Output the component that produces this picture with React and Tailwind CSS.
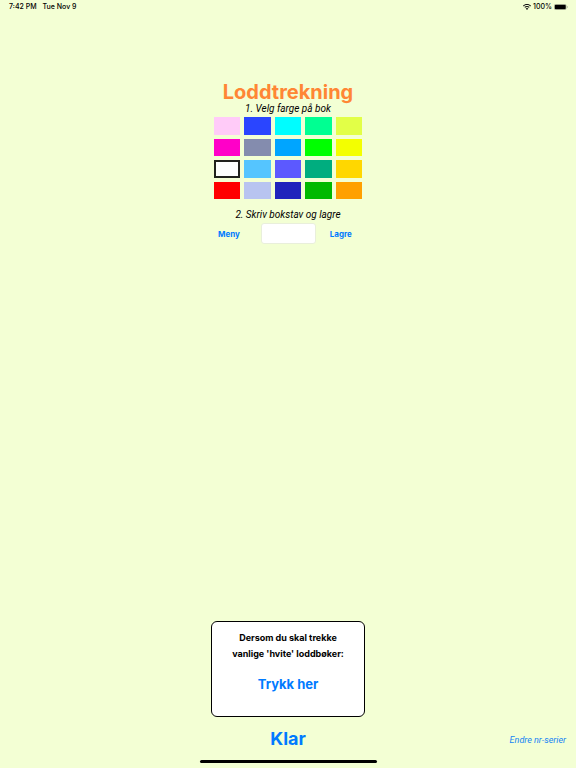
import React, { useState } from 'react';

const COLORS = [
  { name: 'Lys rosa', className: 'bg-[#ffcbf8]' },
  { name: 'Blå', className: 'bg-[#2a45ff]' },
  { name: 'Cyan', className: 'bg-[#00fdff]' },
  { name: 'Mint', className: 'bg-[#00ff92]' },
  { name: 'Lime', className: 'bg-[#e2ff47]' },
  { name: 'Rosa', className: 'bg-[#ff00c8]' },
  { name: 'Grå', className: 'bg-[#848cae]' },
  { name: 'Himmelblå', className: 'bg-[#00a5ff]' },
  { name: 'Grønn', className: 'bg-[#00ff00]' },
  { name: 'Gul', className: 'bg-[#f3ff00]' },
  { name: 'Hvit', className: 'bg-[#fdfffd]' },
  { name: 'Lys blå', className: 'bg-[#55c5ff]' },
  { name: 'Lilla', className: 'bg-[#5c59ff]' },
  { name: 'Sjøgrønn', className: 'bg-[#00ad7f]' },
  { name: 'Gull', className: 'bg-[#ffd700]' },
  { name: 'Rød', className: 'bg-[#ff0000]' },
  { name: 'Gråblå', className: 'bg-[#b8c4f0]' },
  { name: 'Mørk blå', className: 'bg-[#2024bc]' },
  { name: 'Mørk grønn', className: 'bg-[#00b900]' },
  { name: 'Oransje', className: 'bg-[#ffa000]' },
];

const WifiIcon = () => (
  <svg viewBox="0 0 16 12" className="w-2 h-[6px]" aria-hidden="true">
    <path
      d="M8 0C4.900 0 2.100 1.200 0 3.200l1.500 1.600C3.200 3.200 5.500 2.200 8 2.200s4.800 1 6.500 2.600L16 3.200C13.900 1.200 11.100 0 8 0Z"
      fill="#111"
    />
    <path
      d="M8 3.900c-2 0-3.900.8-5.300 2.100l1.600 1.700C5.300 6.700 6.600 6.200 8 6.200s2.700.5 3.700 1.500L13.300 6C11.900 4.700 10 3.900 8 3.900Z"
      fill="#111"
    />
    <path d="M8 7.800c-1 0-1.900.4-2.600 1.100L8 12l2.600-3.100C9.900 8.200 9 7.800 8 7.800Z" fill="#111" />
  </svg>
);

const BatteryIcon = () => (
  <svg viewBox="0 0 28 12" className="w-[14px] h-[6px]" aria-hidden="true">
    <rect x="0.500" y="0.500" width="24" height="11" rx="3" fill="none" stroke="#8d9581" />
    <rect x="1.500" y="1.500" width="22" height="9" rx="2" fill="#000" />
    <path d="M26 4v4c.8-.3 1.500-1.100 1.500-2S26.800 4.300 26 4Z" fill="#8d9581" />
  </svg>
);

const StatusBar = () => (
  <header className="flex items-center justify-between h-[14px] pl-[9px] pr-2 text-[7px] font-medium text-black">
    <div className="flex gap-[6px]">
      <span>7:42 PM</span>
      <span>Tue Nov 9</span>
    </div>
    <div className="flex items-center gap-[2px]">
      <WifiIcon />
      <span>100%</span>
      <BatteryIcon />
    </div>
  </header>
);

const App = () => {
  const [selected, setSelected] = useState('Hvit');
  const [letter, setLetter] = useState('');

  return (
    <div className="flex flex-col min-h-screen bg-[#f3ffd4] text-black font-['Inter','Liberation_Sans',sans-serif]">
      <StatusBar />

      <main className="flex flex-col flex-1 items-center pt-[67px]">
        <h1 className="text-[20px] leading-[22px] font-bold text-[#ff8635]">Loddtrekning</h1>
        <p className="font-['Roboto','Liberation_Sans',sans-serif] text-[10px] leading-3 italic">
          1. Velg farge på bok
        </p>

        <div className="grid grid-cols-5 grid-rows-4 gap-1 w-[148px] h-[82px] mt-[2px]">
          {COLORS.map((color) => (
            <button
              key={color.name}
              type="button"
              aria-label={color.name}
              aria-pressed={selected === color.name}
              onClick={() => setSelected(color.name)}
              className={`${color.className} ${
                selected === color.name ? 'border-2 border-[#20221c]' : ''
              }`}
            />
          ))}
        </div>

        <label
          htmlFor="letter"
          className="mt-[10px] font-['Roboto','Liberation_Sans',sans-serif] text-[10px] leading-3 italic"
        >
          2. Skriv bokstav og lagre
        </label>
        <div className="grid grid-cols-[1fr_55px_1fr] items-center w-[148px] mt-[2px]">
          <button type="button" className="pl-1 text-left text-[8px] leading-3 font-bold text-[#007aff]">
            Meny
          </button>
          <input
            id="letter"
            type="text"
            value={letter}
            onChange={(e) => setLetter(e.target.value)}
            className="w-full h-[21px] px-1 text-[10px] text-center bg-white border border-[#e9efdb] rounded-[3px]"
          />
          <button type="button" className="pl-1 text-[8px] leading-3 font-bold text-[#007aff]">
            Lagre
          </button>
        </div>

        <section className="flex flex-col items-center w-[154px] h-24 mt-auto pt-2 bg-white border border-black rounded-md">
          <p className="text-[9px] leading-4 font-bold text-center">
            Dersom du skal trekke
            <br />
            vanlige 'hvite' loddbøker:
          </p>
          <button type="button" className="mt-3 text-[13px] leading-5 font-bold text-[#007aff]">
            Trykk her
          </button>
        </section>
      </main>

      <footer className="pb-[5px]">
        <div className="grid grid-cols-[1fr_auto_1fr] items-center h-[43px] px-[10px]">
          <button
            type="button"
            className="col-start-2 text-[18px] leading-6 font-bold text-[#007aff]"
          >
            Klar
          </button>
          <button
            type="button"
            className="justify-self-end pt-[3px] font-['Roboto','Liberation_Sans',sans-serif] text-[9px] leading-3 italic text-[#1584f5]"
          >
            Endre nr-serier
          </button>
        </div>
        <div className="w-[177px] h-[3px] mx-auto rounded-full bg-black" />
      </footer>
    </div>
  );
};

export default App;
